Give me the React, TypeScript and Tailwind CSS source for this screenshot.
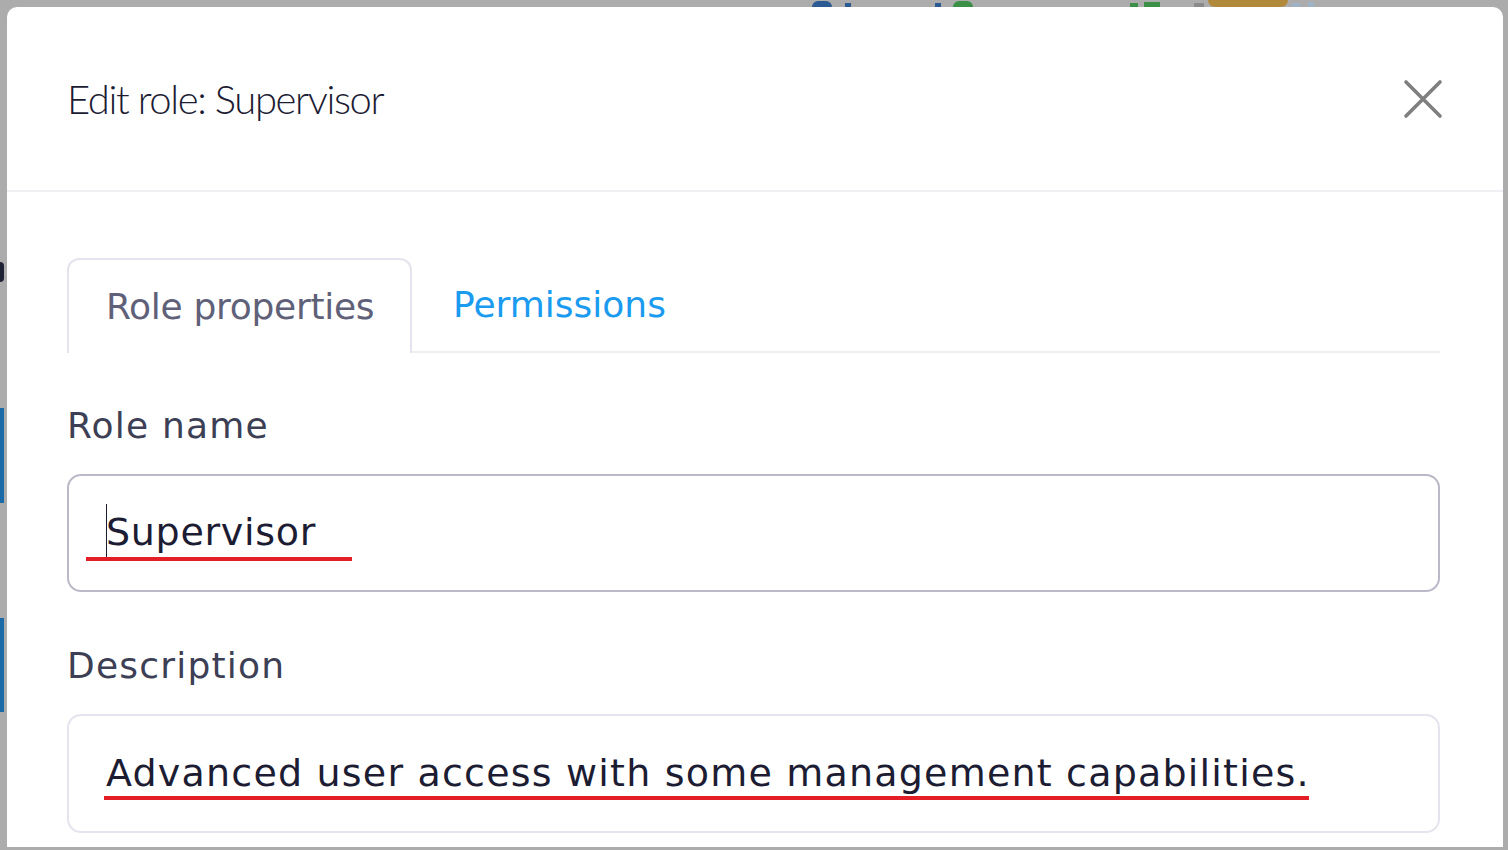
const body = { fontFamily: "'DejaVu Sans', 'Noto Sans', sans-serif" };

const Backdrop = () => (
  <div className="flex h-full w-full flex-col">
    <div className="flex h-[7px] items-end gap-0 pl-[812px]">
      <div className="h-[6px] w-[20px] rounded-t-full bg-[#2c5a93]" />
      <div className="ml-[13px] h-[4px] w-[6px] bg-[#2c5a93]" />
      <div className="ml-[84px] h-[4px] w-[6px] bg-[#2c5a93]" />
      <div className="ml-[12px] h-[6px] w-[20px] rounded-t-full bg-[#3b8f47]" />
      <div className="ml-[157px] h-[4px] w-[8px] bg-[#3b8f47]" />
      <div className="ml-[6px] h-[5px] w-[16px] bg-[#3b8f47]" />
      <div className="ml-[34px] h-[4px] w-[10px] bg-[#8a8a8a]" />
      <div className="ml-[4px] h-[7px] w-[80px] rounded-b-full bg-[#b08a3a]" />
      <div className="ml-[4px] h-[4px] w-[8px] bg-[#9fb3c6]" />
      <div className="ml-[8px] h-[5px] w-[6px] bg-[#9fb3c6]" />
    </div>
    <div className="flex flex-col pt-[255px]">
      <div className="h-[20px] w-[4px] rounded-r-full bg-[#1e2235]" />
      <div className="mt-[126px] h-[95px] w-[4px] bg-[#1b6aa8]" />
      <div className="mt-[115px] h-[94px] w-[4px] bg-[#1b6aa8]" />
    </div>
  </div>
);

const CloseIcon = () => (
  <svg width="40" height="40" viewBox="0 0 40 40" className="text-[#7f7f7f]">
    <path
      d="M3 3 L37 37 M37 3 L3 37"
      stroke="currentColor"
      strokeWidth="3.6"
      strokeLinecap="round"
      fill="none"
    />
  </svg>
);

export default function App() {
  return (
    <div className="relative h-[850px] w-[1508px] overflow-hidden bg-[#acacac]">
      <Backdrop />
      <div className="absolute left-[7px] top-[7px] flex h-[840px] w-[1496px] flex-col rounded-t-[10px] bg-white">
        <div className="flex h-[185px] items-center justify-between border-b-2 border-[#eef0f4] pl-[60px] pr-[60px]">
          <h1
            className="text-[40px] font-light tracking-[-1.4px] text-[#1c1c33]"
            style={{ fontFamily: "Lato, 'Noto Sans', sans-serif" }}
          >
            Edit role: Supervisor
          </h1>
          <CloseIcon />
        </div>
        <div className="flex flex-col pl-[60px] pr-[63px] pt-[66px]" style={body}>
          <div className="flex items-end border-b-2 border-[#eceef2]">
            <div className="-mb-[2px] flex h-[95px] w-[345px] items-center rounded-t-[12px] border-2 border-b-0 border-[#e4e4ee] bg-white pl-[37px]">
              <span className="text-[36px] tracking-[-0.3px] text-[#5f6178]">Role properties</span>
            </div>
            <div className="flex h-[93px] items-center pl-[41px]">
              <span className="text-[36px] text-[#1a9bf0]">Permissions</span>
            </div>
          </div>
          <label className="mt-[49px] text-[36px] leading-[48px] tracking-[1.2px] text-[#3d3f55]">
            Role name
          </label>
          <div className="relative mt-[24px] flex h-[118px] items-center rounded-[14px] border-2 border-[#b9b9c9] pl-[37px]">
            <div className="absolute left-[37px] top-[28px] h-[54px] w-px bg-[#1c1c33]" />
            <span className="-mt-[2px] text-[38px] tracking-[0.7px] text-[#1c1c33]">Supervisor</span>
            <div className="absolute left-[17px] top-[81px] h-[4px] w-[266px] bg-[#e41e26]" />
          </div>
          <label className="mt-[50px] text-[36px] leading-[48px] tracking-[1.2px] text-[#3d3f55]">
            Description
          </label>
          <div className="relative mt-[24px] flex h-[119px] items-center rounded-[14px] border-2 border-[#e4e4ee] pl-[37px]">
            <span className="text-[38px] tracking-[1.2px] text-[#1c1c33]">
              Advanced user access with some management capabilities.
            </span>
            <div className="absolute left-[35px] top-[80px] h-[4px] w-[1205px] bg-[#e41e26]" />
          </div>
        </div>
      </div>
    </div>
  );
}
